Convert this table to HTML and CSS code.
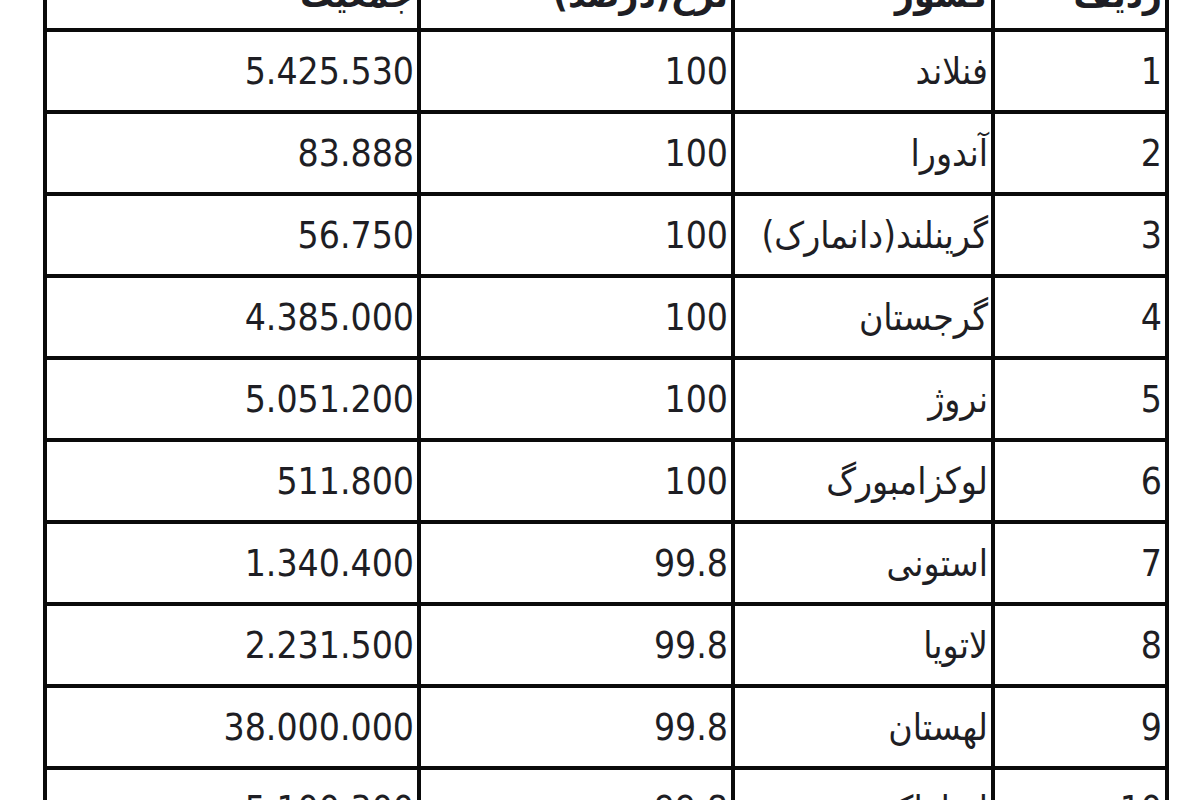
FILE: index.html
```html
<!DOCTYPE html>
<html lang="fa">
<head>
<meta charset="utf-8">
<title>جدول</title>
<link rel="stylesheet" href="styles.css">
</head>
<body>
<table class="data">
  <colgroup>
    <col class="c-rank">
    <col class="c-country">
    <col class="c-rate">
    <col class="c-pop">
  </colgroup>
  <thead>
    <tr><th>ردیف</th><th>کشور</th><th>نرخ(درصد)</th><th>جمعیت</th></tr>
  </thead>
  <tbody>
    <tr><td>1</td><td>فنلاند</td><td>100</td><td>5.425.530</td></tr>
    <tr><td>2</td><td>آندورا</td><td>100</td><td>83.888</td></tr>
    <tr><td>3</td><td>گرینلند(دانمارک)</td><td>100</td><td>56.750</td></tr>
    <tr><td>4</td><td>گرجستان</td><td>100</td><td>4.385.000</td></tr>
    <tr><td>5</td><td>نروژ</td><td>100</td><td>5.051.200</td></tr>
    <tr><td>6</td><td>لوکزامبورگ</td><td>100</td><td>511.800</td></tr>
    <tr><td>7</td><td>استونی</td><td>99.8</td><td>1.340.400</td></tr>
    <tr><td>8</td><td>لاتویا</td><td>99.8</td><td>2.231.500</td></tr>
    <tr><td>9</td><td>لهستان</td><td>99.8</td><td>38.000.000</td></tr>
    <tr><td>10</td><td>اسلواکی</td><td>99.8</td><td>5.100.300</td></tr>
  </tbody>
</table>
</body>
</html>
```
FILE: styles.css
```css
html, body {
  margin: 0;
  padding: 0;
  background: #ffffff;
  overflow: hidden;
}
body {
  width: 1200px;
  height: 800px;
  font-family: "DejaVu Sans Condensed", "DejaVu Sans", sans-serif;
  font-size: 37px;
  color: #1e1e24;
}
.data {
  direction: rtl;
  margin: -42px 0 0 43px;
  width: 1125px;
  table-layout: fixed;
  border-collapse: separate;
  border-spacing: 0;
  border: 2px solid #0a0a0a;
}
.c-rank { width: 174px; }
.c-country { width: 260px; }
.c-rate { width: 314px; }
.c-pop { width: 374px; }
.data th,
.data td {
  border: 2px solid #0a0a0a;
  text-align: right;
  padding: 0 3px 0 4px;
  white-space: nowrap;
  overflow: hidden;
}
.data th {
  height: 70px;
  vertical-align: bottom;
  padding-bottom: 12px;
  font-weight: bold;
  box-sizing: border-box;
}
.data td {
  height: 82px;
  box-sizing: border-box;
  vertical-align: middle;
}
```
